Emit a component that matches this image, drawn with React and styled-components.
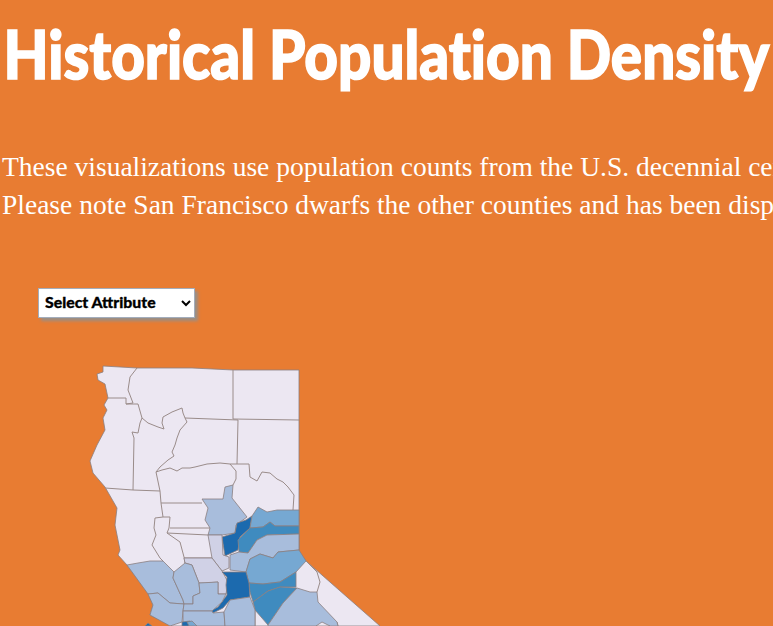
import styled, { createGlobalStyle } from 'styled-components'

const GlobalStyle = createGlobalStyle`
  html, body {
    margin: 0;
    padding: 0;
    background-color: #E87C32;
    overflow: hidden;
  }
`

const Page = styled.div`
  width: 773px;
  height: 626px;
  overflow: hidden;
  color: #fff;
`

const Title = styled.h1`
  margin: 0;
  padding: 14px 0 0 4px;
  height: 134px;
  font-family: "Lato", sans-serif;
  font-weight: 900;
  font-size: 66px;
  line-height: 80px;
  white-space: nowrap;
  font-variant-ligatures: none;
  -webkit-text-stroke: 1.6px #fff;
  transform-origin: left top;
  transform: scaleX(0.885);
`

const Intro = styled.div`
  font-family: "Liberation Serif", serif;
  font-size: 27.5px;
  line-height: 38px;
  white-space: nowrap;
  padding-left: 2px;
`

const AttributeSelect = styled.select`
  display: block;
  margin: 64px 0 0 38px;
  width: 157px;
  height: 30px;
  padding: 0 2px 3px;
  border: 1px solid #a3adbc;
  border-radius: 0;
  background: #fff;
  color: #000;
  font-family: "Lato", sans-serif;
  font-weight: 900;
  font-size: 15.8px;
  -webkit-text-stroke: 0.3px #000;
  box-shadow: 3px 3px 3px #9a8f86;
`

const MapSvg = styled.svg`
  display: block;
  margin: 37px 0 0 80px;
`

const County = styled.polygon`
  fill: ${p => p.$fill};
  stroke: #8a7f80;
  stroke-width: 0.8;
  stroke-linejoin: round;
`

const Border = styled.polyline`
  fill: none;
  stroke: #9a8c8a;
  stroke-width: 1;
  stroke-linejoin: round;
`

const NONE = '#ECE7F2'
const LAVENDER = '#D0D1E6'
const LIGHT = '#A8BDDC'
const MID = '#76A8D2'
const TEAL = '#3F8BBF'
const DARK = '#1C6AAE'

const state = '103,366 137,368 192,368 233,370 299,370 299,553 306,561 380,626 172,626 150,615 153,605 148,593 127,565 118,555 120,550 115,525 117,508 105,487 93,473 90,461 97,445 105,430 103,418 107,410 104,405 108,398 105,384 98,380 97,374 103,372'

const borders = [
  '137,368 130,377 128,390 133,403 126,404 126,398 108,398',
  '233,370 233,419 299,420',
  '185,418 238,420 237,464 249,464 250,477 257,481 262,472 270,473 277,479 283,482 288,487 294,495 293,510',
  '126,404 138,404 142,418 148,423 158,427 164,429 162,423 163,417 172,412 182,408 183,413 185,418 187,422 180,430 177,438 175,445 172,452 174,456 168,460 160,467 156,472 162,470 170,468 177,471 182,468 190,468 195,467 207,464 220,463 230,464 237,464',
  '142,418 140,423 138,433 132,432 134,438 133,490',
  '156,472 160,491 161,503 163,517 155,518 154,528 156,535 152,545 160,558 163,561',
  '105,488 133,490 160,491',
  '230,464 236,471 236,479 233,485',
  '161,503 202,503',
  '163,517 170,517 169,528 167,533 180,542 184,557 185,563',
  '170,528 197,528 210,528',
  '167,533 208,535',
  '184,558 212,558',
  '306,561 317,572 320,582 317,592',
  '337,622 338,626',
  '255,610 255,626',
  '224,612 225,626',
]

const counties = [
  [LIGHT, '202,499 223,499 225,487 233,485 232,498 247,517 236,525 235,533 222,535 208,535 210,528 205,520 208,508'],
  [DARK, '252,516 250,528 240,537 238,550 225,556 222,537 235,533 237,523 246,520'],
  [MID, '252,516 258,507 267,512 277,510 299,510 299,526 275,526 270,522 263,527 250,528'],
  [TEAL, '250,528 263,527 270,522 275,526 299,526 299,534 267,535 257,540 248,553 239,552 238,540'],
  [LIGHT, '267,535 299,534 299,550 278,552 273,558 260,554 250,559 246,572 230,570 230,555 239,552 248,553 257,540'],
  [MID, '260,554 273,558 278,552 299,550 306,561 296,572 280,582 263,584 249,583 246,572 250,559'],
  [TEAL, '249,583 263,584 280,582 296,572 296,587 280,587 268,591 253,602 250,592'],
  [TEAL, '253,602 268,591 280,587 297,588 283,603 268,625 255,610'],
  [LAVENDER, '208,535 222,535 223,555 229,557 229,568 222,571 212,558'],
  [LAVENDER, '184,558 212,558 222,571 228,582 226,594 218,594 218,582 205,583 199,583 192,565 185,563'],
  [DARK, '222,572 246,572 249,583 250,597 230,600 223,608 213,613 210,611 218,607 227,595 226,585 227,577'],
  [LIGHT, '127,565 138,563 150,561 163,561 174,572 173,578 183,600 184,604 170,603 158,593 148,594'],
  [LIGHT, '174,572 185,563 192,565 199,583 200,593 193,596 193,604 184,604 183,600 173,578'],
  [LIGHT, '148,594 158,593 170,603 184,604 183,611 182,622 170,626 150,615 153,605'],
  [LIGHT, '193,596 200,593 199,583 218,582 218,594 226,594 222,602 212,611 195,611 183,611 184,604 193,604'],
  [LIGHT, '183,611 212,611 213,613 224,612 225,626 183,626'],
  [LIGHT, '224,612 230,600 250,597 255,610 255,626 225,626'],
  [LIGHT, '268,625 283,603 297,588 310,592 317,592 318,602 337,622 338,626 268,626'],
  [NONE, '316,626 322,622 330,626'],
  [DARK, '182,622 190,621 193,626 182,626'],
  [MID, '187,622 192,621 197,626 189,626'],
  [DARK, '145,626 148,623 152,626'],
]

function CountyMap() {
  return (
    <MapSvg width="320" height="271" viewBox="80 355 320 271">
      <County $fill={NONE} points={state} />
      {borders.map((points, i) => <Border key={i} points={points} />)}
      {counties.map(([fill, points], i) => <County key={i} $fill={fill} points={points} />)}
    </MapSvg>
  )
}

function App() {
  return (
    <Page>
      <GlobalStyle />
      <Title>Historical Population Density</Title>
      <Intro>
        <div>These visualizations use population counts from the U.S. decennial census</div>
        <div>Please note San Francisco dwarfs the other counties and has been displayed separately</div>
      </Intro>
      <AttributeSelect defaultValue="">
        <option value="">Select Attribute</option>
      </AttributeSelect>
      <CountyMap />
    </Page>
  )
}

export default App
